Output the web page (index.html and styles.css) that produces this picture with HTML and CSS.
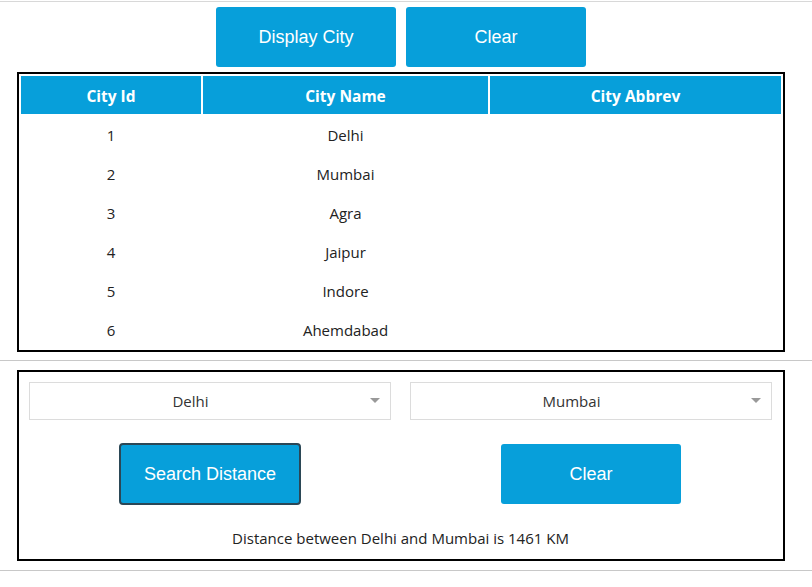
FILE: index.html
```html
<!DOCTYPE html>
<html>
<head>
<meta charset="utf-8">
<link rel="stylesheet" href="styles.css">
</head>
<body>
<div class="rule rule-top"></div>
<div class="page">
  <div class="top-actions">
    <button class="btn">Display City</button>
    <button class="btn">Clear</button>
  </div>
  <table class="cities">
    <thead>
      <tr><th class="c1">City Id</th><th class="c2">City Name</th><th class="c3">City Abbrev</th></tr>
    </thead>
    <tbody>
      <tr><td>1</td><td>Delhi</td><td></td></tr>
      <tr><td>2</td><td>Mumbai</td><td></td></tr>
      <tr><td>3</td><td>Agra</td><td></td></tr>
      <tr><td>4</td><td>Jaipur</td><td></td></tr>
      <tr><td>5</td><td>Indore</td><td></td></tr>
      <tr><td>6</td><td>Ahemdabad</td><td></td></tr>
    </tbody>
  </table>
</div>
<div class="rule rule-mid"></div>
<div class="page">
  <div class="distance-box">
    <div class="row">
      <div class="select"><span class="select-text">Delhi</span><span class="arrow"></span></div>
      <div class="select"><span class="select-text">Mumbai</span><span class="arrow"></span></div>
    </div>
    <div class="row row-buttons">
      <div class="cell"><button class="btn btn-focus">Search Distance</button></div>
      <div class="cell"><button class="btn">Clear</button></div>
    </div>
    <p class="result">Distance between Delhi and Mumbai is 1461 KM</p>
  </div>
</div>
<div class="rule rule-bottom"></div>
</body>
</html>
```

FILE: styles.css
```css
html, body {
  margin: 0;
  padding: 0;
  background: #fff;
}
body {
  font-family: "Open Sans", "Noto Sans", sans-serif;
  color: #222;
}
.rule {
  height: 1px;
  background: #d8d8d8;
}
.rule-top { margin-top: 1px; }
.rule-mid { margin-top: 8px; background: #c8c8c8; }
.rule-bottom { margin-top: 9px; background: #c8c8c8; }

.page {
  margin-left: 17px;
  width: 768px;
}
.top-actions {
  display: flex;
  justify-content: center;
  gap: 10px;
  padding-top: 5px;
}
.btn {
  width: 180px;
  height: 60px;
  background: #079fda;
  color: #fff;
  border: none;
  border-radius: 3px;
  font-family: "Liberation Sans", Arial, sans-serif;
  font-size: 18px;
  padding: 0;
  cursor: pointer;
}
.btn-focus {
  width: 182px;
  height: 62px;
  border: 2px solid #2b4756;
  border-radius: 4px;
}
.cities {
  margin-top: 5px;
  width: 768px;
  border: 2px solid #000;
  border-spacing: 2px;
  table-layout: fixed;
  font-size: 15px;
}
.cities th {
  background: #079fda;
  color: #fff;
  font-weight: 700;
  height: 37px;
  padding: 1px 0 0;
  font-size: 15.5px;
}
.cities .c1 { width: 180px; }
.cities .c2 { width: 285px; }
.cities .c3 { width: 291px; }
.cities td {
  text-align: center;
  height: 37px;
  padding: 0;
  color: #222;
}
.distance-box {
  margin-top: 9px;
  border: 2px solid #000;
  height: 191px;
  padding: 10px 11px 0 10px;
  box-sizing: border-box;
}
.row {
  display: grid;
  grid-template-columns: 1fr 1fr;
  column-gap: 19px;
}
.row-buttons {
  margin-top: 23px;
  height: 62px;
  align-items: center;
}
.cell {
  display: flex;
  justify-content: center;
  align-items: center;
}
.select {
  height: 38px;
  border: 1px solid #dcdcdc;
  box-sizing: border-box;
  display: flex;
  align-items: center;
  font-size: 15px;
  color: #333;
}
.select-text {
  flex: 1;
  text-align: center;
}
.arrow {
  flex: none;
  width: 0;
  height: 0;
  border-left: 5px solid transparent;
  border-right: 5px solid transparent;
  border-top: 5px solid #999;
  margin: -2px 10px 0 19px;
}
.result {
  margin: 23px 0 0;
  text-align: center;
  font-size: 15px;
  color: #222;
}
```
